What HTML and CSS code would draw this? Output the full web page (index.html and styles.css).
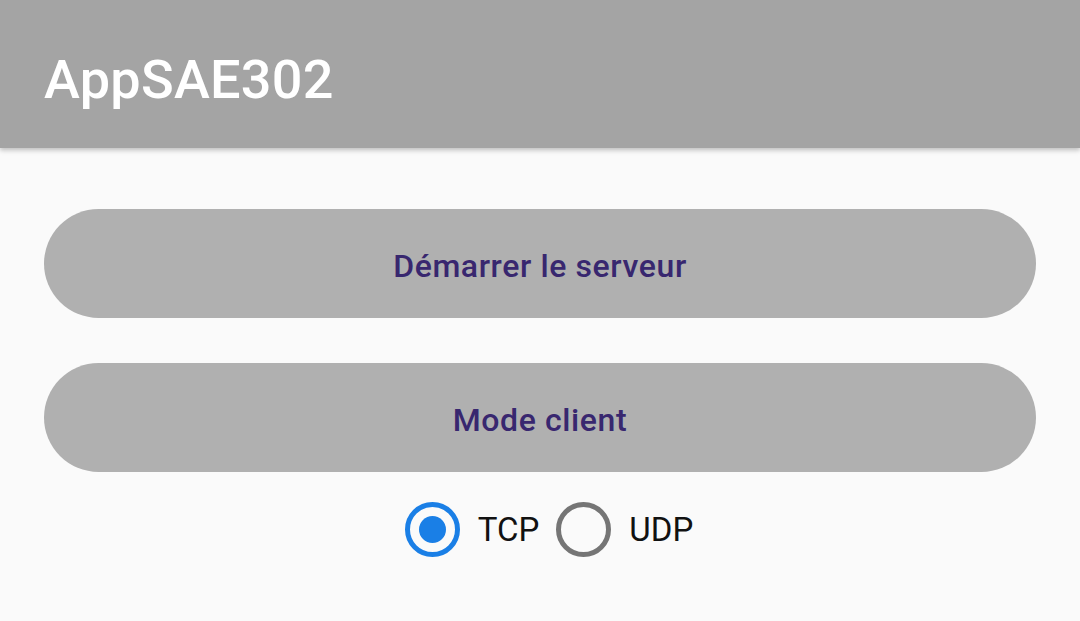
FILE: index.html
```html
<!DOCTYPE html>
<html lang="fr">
<head>
<meta charset="utf-8">
<title>AppSAE302</title>
<link rel="stylesheet" href="styles.css">
</head>
<body>
<header class="appbar">
  <h1 class="title">AppSAE302</h1>
</header>
<main class="content">
  <button class="btn" type="button">Démarrer le serveur</button>
  <button class="btn" type="button">Mode client</button>
  <div class="radios">
    <label class="radio">
      <span class="circle checked"><span class="dot"></span></span>
      <span class="label">TCP</span>
    </label>
    <label class="radio">
      <span class="circle"></span>
      <span class="label">UDP</span>
    </label>
  </div>
</main>
</body>
</html>
```
FILE: styles.css
```css
html, body {
  margin: 0;
  padding: 0;
  background: #fafafa;
  font-family: Roboto, "Liberation Sans", sans-serif;
  width: 1080px;
  height: 621px;
  overflow: hidden;
}
.appbar {
  height: 148px;
  background: #a4a4a4;
  box-shadow: 0 2px 4px rgba(0,0,0,0.18), 0 4px 5px rgba(0,0,0,0.06);
  display: flex;
  align-items: center;
  padding-left: 44px;
  position: relative;
}
.title {
  margin: 0;
  color: #ffffff;
  font-weight: 500;
  font-size: 54px;
  letter-spacing: 0.3px;
  padding-top: 10px;
}
.content {
  padding: 61px 44px 0 44px;
  display: flex;
  flex-direction: column;
  gap: 45px;
}
.btn {
  height: 109px;
  border: none;
  border-radius: 55px;
  background: #b0b0b0;
  color: #38276f;
  font-family: Roboto, "Liberation Sans", sans-serif;
  font-weight: 500;
  font-size: 32px;
  letter-spacing: 0.6px;
  padding: 4px 0 0 0;
  width: 100%;
}
.radios {
  margin-top: -15px;
  display: flex;
  justify-content: center;
  align-items: center;
  gap: 17px;
  padding-left: 18px;
}
.radio {
  display: flex;
  align-items: center;
  gap: 18px;
}
.circle {
  box-sizing: border-box;
  width: 55px;
  height: 55px;
  border-radius: 50%;
  border: 5px solid #757575;
  display: flex;
  align-items: center;
  justify-content: center;
}
.circle.checked {
  border-color: #1a7fe6;
}
.dot {
  width: 27px;
  height: 27px;
  border-radius: 50%;
  background: #1a7fe6;
}
.label {
  font-size: 33px;
  color: #111;
}
```
